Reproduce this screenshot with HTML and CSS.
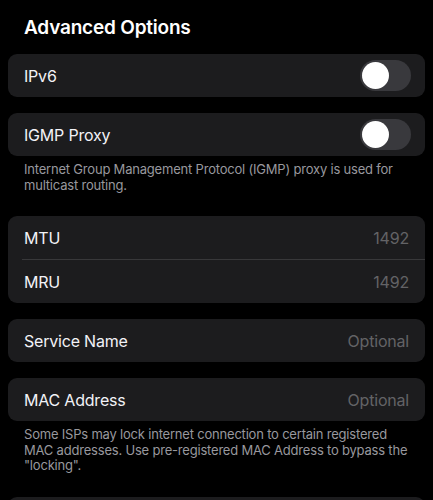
FILE: index.html
```html
<!DOCTYPE html>
<html lang="en">
<head>
    <meta charset="UTF-8">
    <meta name="viewport" content="width=device-width, initial-scale=1.0">
    <title>Advanced Options</title>
    <link rel="stylesheet" href="styles.css">
</head>
<body>
    <div class="page">
        <h1 class="title">Advanced Options</h1>

        <div class="group">
            <div class="row">
                <span class="label">IPv6</span>
                <span class="switch"><span class="knob"></span></span>
            </div>
        </div>

        <div class="group">
            <div class="row">
                <span class="label">IGMP Proxy</span>
                <span class="switch"><span class="knob"></span></span>
            </div>
        </div>
        <p class="footer">Internet Group Management Protocol (IGMP) proxy is used for multicast routing.</p>

        <div class="group">
            <div class="row">
                <span class="label">MTU</span>
                <span class="value">1492</span>
            </div>
            <div class="divider"></div>
            <div class="row">
                <span class="label">MRU</span>
                <span class="value">1492</span>
            </div>
        </div>

        <div class="group">
            <div class="row">
                <span class="label">Service Name</span>
                <span class="value">Optional</span>
            </div>
        </div>

        <div class="group">
            <div class="row">
                <span class="label">MAC Address</span>
                <span class="value">Optional</span>
            </div>
        </div>
        <p class="footer">Some ISPs may lock internet connection to certain registered MAC addresses. Use pre-registered MAC Address to bypass the "locking".</p>

        <div class="group">
            <div class="row"></div>
        </div>
    </div>
</body>
</html>
```

FILE: styles.css
```css
body {
    margin: 0;
    padding: 0;
    background-color: #000;
    font-family: Inter, "Noto Sans", sans-serif;
    color: #fff;
    overflow: hidden;
}
.page {
    padding: 0 8px;
}
.title {
    margin: 0;
    height: 54px;
    padding: 17px 16px 0;
    box-sizing: border-box;
    font-size: 19px;
    font-weight: 600;
    line-height: 22px;
    letter-spacing: -0.2px;
}
.group {
    background-color: #1c1c1e;
    border-radius: 9px;
    margin-bottom: 16px;
}
.row {
    height: 43px;
    display: flex;
    align-items: center;
    justify-content: space-between;
    padding: 0 16px;
}
.label {
    font-size: 16px;
    letter-spacing: -0.2px;
    color: #f2f2f7;
}
.value {
    font-size: 16px;
    color: #636366;
    letter-spacing: -0.2px;
}
.divider {
    height: 1px;
    background-color: #38383a;
    margin-left: 14px;
}
.switch {
    width: 51px;
    height: 31px;
    border-radius: 16px;
    background-color: #39393d;
    margin-right: -2px;
    display: flex;
    align-items: center;
    padding: 0 2px;
    box-sizing: border-box;
}
.knob {
    width: 27px;
    height: 27px;
    border-radius: 50%;
    background-color: #fff;
}
.footer {
    margin: -10px 0 23px;
    padding: 0 16px;
    font-size: 13px;
    line-height: 15.5px;
    letter-spacing: -0.2px;
    color: #98989e;
}
```
